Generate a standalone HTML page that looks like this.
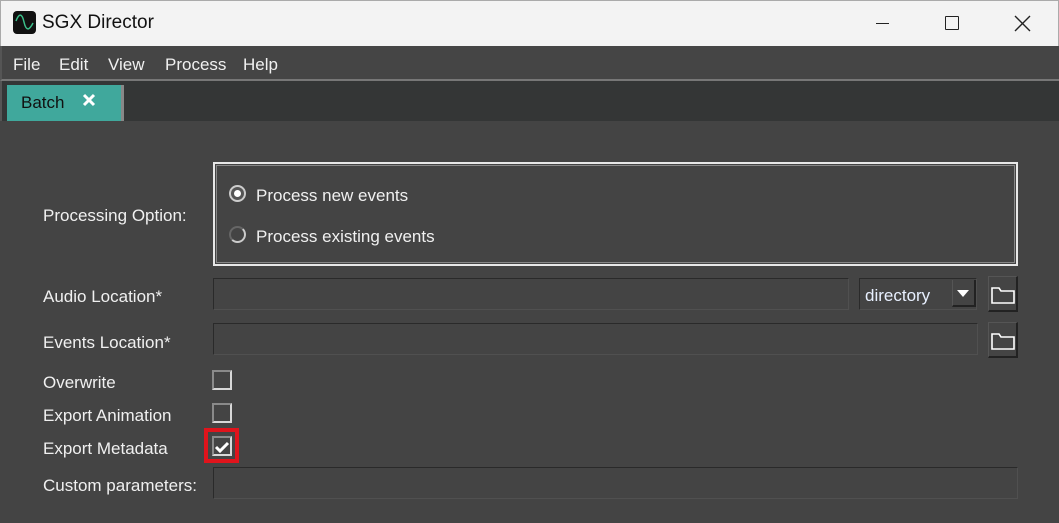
<!DOCTYPE html>
<html><head><meta charset="utf-8"><style>
*{margin:0;padding:0;box-sizing:border-box}
body{width:1059px;height:523px;overflow:hidden;background:#444;font-family:"Segoe UI","Liberation Sans",sans-serif;position:relative}
.a{position:absolute}
.t{color:#f0f0f0;font-size:17px;white-space:nowrap;margin-top:2px}
.inp{position:absolute;border:1px solid #353535;border-top-color:#2a2a2a;border-left-color:#2a2a2a;border-bottom-color:#505050;border-right-color:#505050;background:#444}
.cb{position:absolute;width:20px;height:20px;border:2px solid #d8d8d8;border-top-color:#8a8a8a;border-left-color:#8a8a8a;background:#444}
.fb{position:absolute;width:30px;height:36px;border-right:2px solid #222;border-bottom:2px solid #222;border-top:1px solid #555;border-left:1px solid #555}
</style></head><body>
<div class="a" style="left:0;top:0;width:1059px;height:46px;background:#f3f3f3;border-left:1px solid #aaa;border-top:1px solid #aaa;border-right:1px solid #aaa"></div>
<div class="a" style="left:13px;top:11px;width:23px;height:23px;background:#111;border-radius:4px">
<svg width="23" height="23"><path d="M3 10 C6 2,9 2,11 11 S16 20,20 12" stroke="#3bbf8a" stroke-width="1.5" fill="none"/></svg></div>
<div class="a" style="left:42px;top:12px;font-size:19px;color:#111">SGX Director</div>
<div class="a" style="left:876px;top:23px;width:13px;height:1px;background:#222"></div>
<div class="a" style="left:945px;top:16px;width:14px;height:14px;border:1.5px solid #222;border-radius:1px"></div>
<svg class="a" style="left:1014px;top:15px" width="17" height="17"><path d="M1 1L16 16M16 1L1 16" stroke="#222" stroke-width="1.4"/></svg>
<div class="a" style="left:0;top:46px;width:1059px;height:35px;background:#454545;border-left:2px solid #555;border-bottom:2px solid #777"></div>
<div class="a t" style="left:13px;top:53px">File</div>
<div class="a t" style="left:59px;top:53px">Edit</div>
<div class="a t" style="left:108px;top:53px">View</div>
<div class="a t" style="left:165px;top:53px">Process</div>
<div class="a t" style="left:243px;top:53px">Help</div>
<div class="a" style="left:0;top:81px;width:1059px;height:40px;background:#343636;border-left:2px solid #555"></div>
<div class="a" style="left:7px;top:85px;width:117px;height:36px;background:#40a89c;border-right:3px solid #888"></div>
<div class="a" style="left:21px;top:93px;font-size:17px;color:#111">Batch</div>
<svg class="a" style="left:82px;top:93px" width="14" height="14"><path d="M2 2L12 12M12 2L2 12" stroke="#fff" stroke-width="3"/></svg>
<div class="a t" style="left:43px;top:204px">Processing Option:</div>
<div class="a" style="left:213px;top:162px;width:805px;height:104px;border:2px solid #e8e8e8;outline:1px solid #888;outline-offset:-4px"></div>
<div class="a" style="left:229px;top:185px;width:17px;height:17px;border-radius:50%;border:2px solid #ccc;background:#555"><div style="margin:3px;width:7px;height:7px;border-radius:50%;background:#fff"></div></div>
<div class="a t" style="left:256px;top:184px">Process new events</div>
<div class="a" style="left:229px;top:226px;width:17px;height:17px;border-radius:50%;border:2px solid #ccc;border-top-color:#666;border-left-color:#666"></div>
<div class="a t" style="left:256px;top:225px">Process existing events</div>
<div class="a t" style="left:43px;top:285px">Audio Location*</div>
<div class="inp" style="left:213px;top:278px;width:636px;height:32px"></div>
<div class="inp" style="left:859px;top:278px;width:118px;height:32px"></div>
<div class="a t" style="left:865px;top:284px;color:#e8f0ff">directory</div>
<div class="a" style="left:952px;top:280px;width:24px;height:27px;border-left:1px solid #555;border-bottom:2px solid #222;border-right:2px solid #222"></div>
<svg class="a" style="left:957px;top:290px" width="13" height="8"><path d="M0 0H12L6 7Z" fill="#fff"/></svg>
<div class="fb" style="left:988px;top:276px"></div>
<svg class="a" style="left:991px;top:286px" width="24" height="18"><path d="M1 2H8L10 5H23V17H1Z" fill="none" stroke="#fff" stroke-width="1.6"/></svg>
<div class="a t" style="left:43px;top:331px">Events Location*</div>
<div class="inp" style="left:213px;top:323px;width:765px;height:32px"></div>
<div class="fb" style="left:988px;top:322px"></div>
<svg class="a" style="left:991px;top:332px" width="24" height="18"><path d="M1 2H8L10 5H23V17H1Z" fill="none" stroke="#fff" stroke-width="1.6"/></svg>
<div class="a t" style="left:43px;top:371px">Overwrite</div>
<div class="cb" style="left:212px;top:370px"></div>
<div class="a t" style="left:43px;top:404px">Export Animation</div>
<div class="cb" style="left:212px;top:403px"></div>
<div class="a t" style="left:43px;top:437px">Export Metadata</div>
<div class="a" style="left:204px;top:428px;width:35px;height:35px;border:4px solid #e0141c"></div>
<div class="cb" style="left:212px;top:436px"></div>
<svg class="a" style="left:214px;top:440px" width="16" height="14"><path d="M2 7L6 11L14 3" stroke="#fff" stroke-width="3" fill="none"/></svg>
<div class="a t" style="left:43px;top:474px">Custom parameters:</div>
<div class="inp" style="left:213px;top:467px;width:805px;height:32px"></div>
</body></html>
